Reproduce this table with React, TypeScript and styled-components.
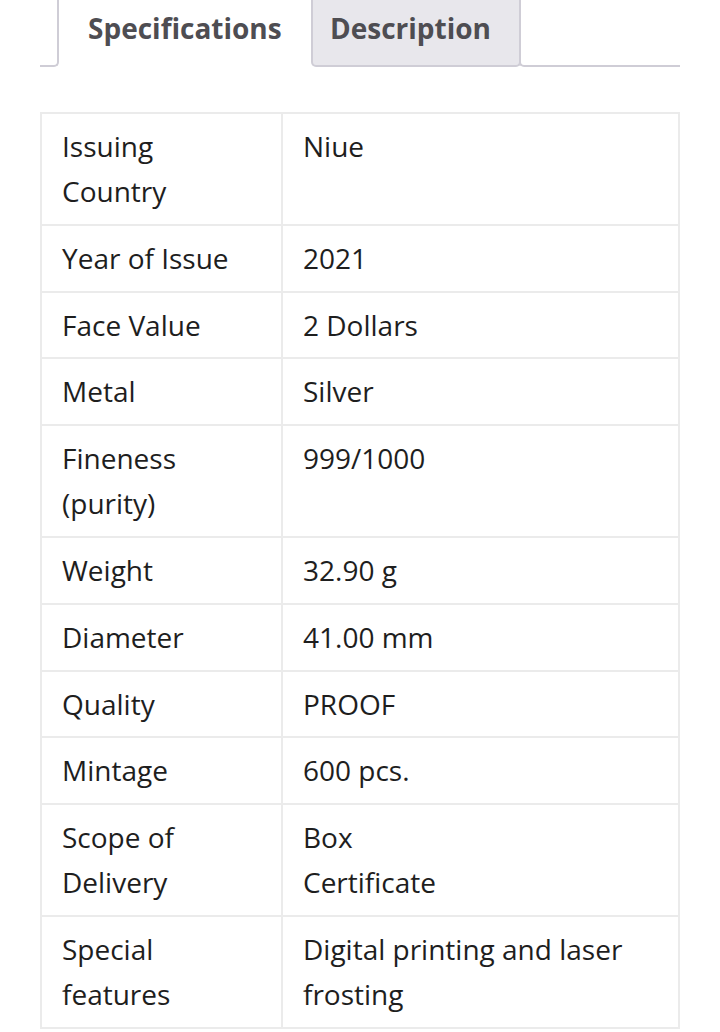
import styled, { createGlobalStyle } from 'styled-components'

const GlobalStyle = createGlobalStyle`
  html, body {
    margin: 0;
    padding: 0;
    background: #fff;
  }
  body {
    font-family: 'Open Sans', 'Noto Sans', sans-serif;
  }
`

interface Spec {
  label: string
  value: string[]
}

const specs: Spec[] = [
  { label: 'Issuing Country', value: ['Niue'] },
  { label: 'Year of Issue', value: ['2021'] },
  { label: 'Face Value', value: ['2 Dollars'] },
  { label: 'Metal', value: ['Silver'] },
  { label: 'Fineness (purity)', value: ['999/1000'] },
  { label: 'Weight', value: ['32.90 g'] },
  { label: 'Diameter', value: ['41.00 mm'] },
  { label: 'Quality', value: ['PROOF'] },
  { label: 'Mintage', value: ['600 pcs.'] },
  { label: 'Scope of Delivery', value: ['Box', 'Certificate'] },
  { label: 'Special features', value: ['Digital printing and laser frosting'] },
]

const Page = styled.div`
  padding: 0 40px;
`

const TabBar = styled.div`
  display: flex;
  height: 68px;
  margin-top: -1px;
`

const Edge = styled.div<{ $side: 'left' | 'right' }>`
  border-bottom: 2px solid #cfcdd6;
  ${(p) =>
    p.$side === 'left'
      ? `width: 17px; border-right: 2px solid #cfcdd6; border-bottom-right-radius: 5px;`
      : `flex: 1; border-left: 2px solid #cfcdd6; border-bottom-left-radius: 5px; margin-left: -2px;`}
`

const Tab = styled.div<{ $active?: boolean }>`
  display: flex;
  align-items: flex-start;
  padding: 10px 0 0 ${(p) => (p.$active ? '29px' : '17px')};
  width: ${(p) => (p.$active ? '252px' : '210px')};
  box-sizing: border-box;
  font-weight: 700;
  font-size: 28px;
  color: #4e4d52;
  background: ${(p) => (p.$active ? '#fff' : '#e8e7ec')};
  ${(p) =>
    !p.$active &&
    `border: 2px solid #cfcdd6; border-top: none; border-radius: 0 0 5px 5px;`}
`

const Table = styled.table`
  margin-top: 45px;
  width: 640px;
  border-collapse: collapse;
  border: 2px solid #ebebeb;
  font-size: 28px;
  line-height: 45px;
  color: #1e1e1e;
`

const Cell = styled.td<{ $label?: boolean }>`
  border: 2px solid #ebebeb;
  padding: 10px 20px 9.8px;
  vertical-align: top;
  width: ${(p) => (p.$label ? '199px' : 'auto')};
`

const Line = styled.div``

export default function App() {
  return (
    <>
      <GlobalStyle />
      <Page>
        <TabBar>
          <Edge $side="left" />
          <Tab $active>Specifications</Tab>
          <Tab>Description</Tab>
          <Edge $side="right" />
        </TabBar>
        <Table>
          <tbody>
            {specs.map((s) => (
              <tr key={s.label}>
                <Cell $label>{s.label}</Cell>
                <Cell>
                  {s.value.map((v) => (
                    <Line key={v}>{v}</Line>
                  ))}
                </Cell>
              </tr>
            ))}
          </tbody>
        </Table>
      </Page>
    </>
  )
}
